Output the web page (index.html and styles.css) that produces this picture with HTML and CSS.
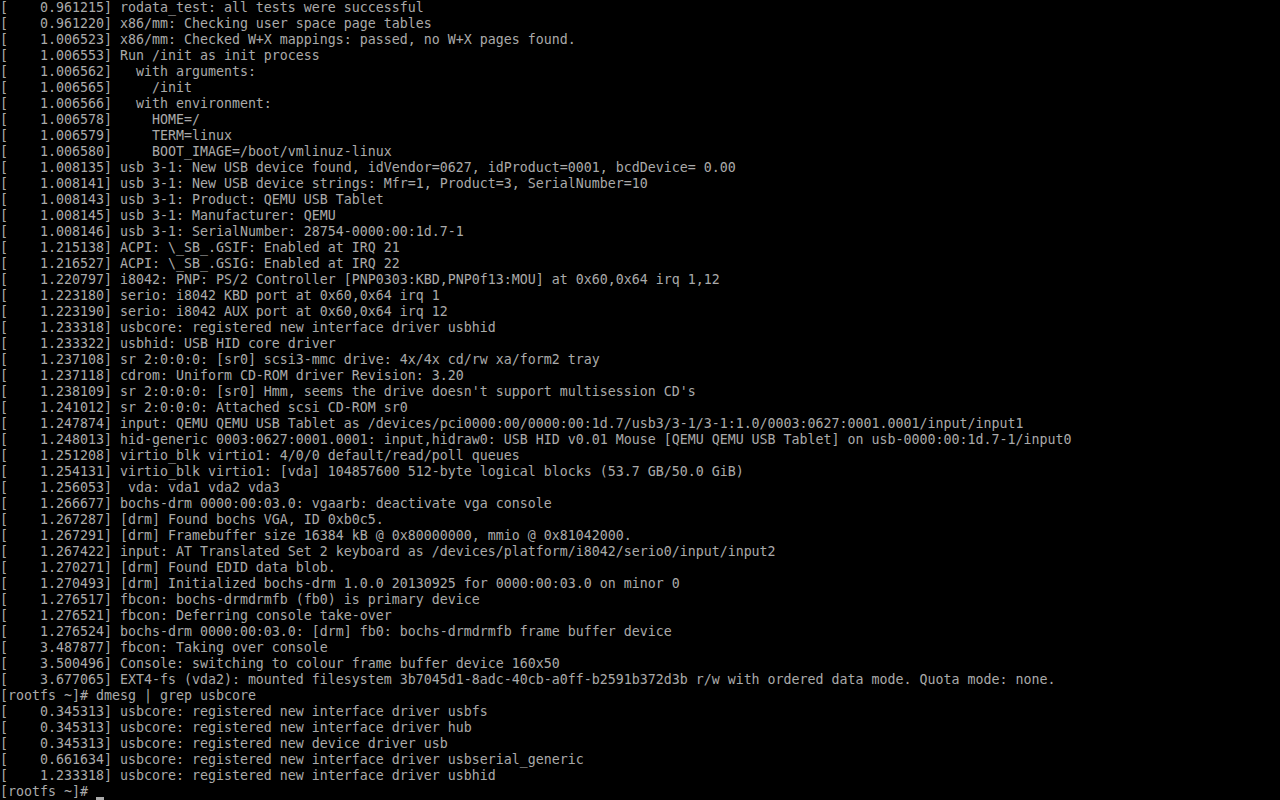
FILE: index.html
```html
<!DOCTYPE html>
<html>
<head>
<meta charset="utf-8">
<link rel="stylesheet" href="styles.css">
</head>
<body>
<pre class="console">[    0.961215] rodata_test: all tests were successful
[    0.961220] x86/mm: Checking user space page tables
[    1.006523] x86/mm: Checked W+X mappings: passed, no W+X pages found.
[    1.006553] Run /init as init process
[    1.006562]   with arguments:
[    1.006565]     /init
[    1.006566]   with environment:
[    1.006578]     HOME=/
[    1.006579]     TERM=linux
[    1.006580]     BOOT_IMAGE=/boot/vmlinuz-linux
[    1.008135] usb 3-1: New USB device found, idVendor=0627, idProduct=0001, bcdDevice= 0.00
[    1.008141] usb 3-1: New USB device strings: Mfr=1, Product=3, SerialNumber=10
[    1.008143] usb 3-1: Product: QEMU USB Tablet
[    1.008145] usb 3-1: Manufacturer: QEMU
[    1.008146] usb 3-1: SerialNumber: 28754-0000:00:1d.7-1
[    1.215138] ACPI: \_SB_.GSIF: Enabled at IRQ 21
[    1.216527] ACPI: \_SB_.GSIG: Enabled at IRQ 22
[    1.220797] i8042: PNP: PS/2 Controller [PNP0303:KBD,PNP0f13:MOU] at 0x60,0x64 irq 1,12
[    1.223180] serio: i8042 KBD port at 0x60,0x64 irq 1
[    1.223190] serio: i8042 AUX port at 0x60,0x64 irq 12
[    1.233318] usbcore: registered new interface driver usbhid
[    1.233322] usbhid: USB HID core driver
[    1.237108] sr 2:0:0:0: [sr0] scsi3-mmc drive: 4x/4x cd/rw xa/form2 tray
[    1.237118] cdrom: Uniform CD-ROM driver Revision: 3.20
[    1.238109] sr 2:0:0:0: [sr0] Hmm, seems the drive doesn't support multisession CD's
[    1.241012] sr 2:0:0:0: Attached scsi CD-ROM sr0
[    1.247874] input: QEMU QEMU USB Tablet as /devices/pci0000:00/0000:00:1d.7/usb3/3-1/3-1:1.0/0003:0627:0001.0001/input/input1
[    1.248013] hid-generic 0003:0627:0001.0001: input,hidraw0: USB HID v0.01 Mouse [QEMU QEMU USB Tablet] on usb-0000:00:1d.7-1/input0
[    1.251208] virtio_blk virtio1: 4/0/0 default/read/poll queues
[    1.254131] virtio_blk virtio1: [vda] 104857600 512-byte logical blocks (53.7 GB/50.0 GiB)
[    1.256053]  vda: vda1 vda2 vda3
[    1.266677] bochs-drm 0000:00:03.0: vgaarb: deactivate vga console
[    1.267287] [drm] Found bochs VGA, ID 0xb0c5.
[    1.267291] [drm] Framebuffer size 16384 kB @ 0x80000000, mmio @ 0x81042000.
[    1.267422] input: AT Translated Set 2 keyboard as /devices/platform/i8042/serio0/input/input2
[    1.270271] [drm] Found EDID data blob.
[    1.270493] [drm] Initialized bochs-drm 1.0.0 20130925 for 0000:00:03.0 on minor 0
[    1.276517] fbcon: bochs-drmdrmfb (fb0) is primary device
[    1.276521] fbcon: Deferring console take-over
[    1.276524] bochs-drm 0000:00:03.0: [drm] fb0: bochs-drmdrmfb frame buffer device
[    3.487877] fbcon: Taking over console
[    3.500496] Console: switching to colour frame buffer device 160x50
[    3.677065] EXT4-fs (vda2): mounted filesystem 3b7045d1-8adc-40cb-a0ff-b2591b372d3b r/w with ordered data mode. Quota mode: none.
[rootfs ~]# dmesg | grep usbcore
[    0.345313] usbcore: registered new interface driver usbfs
[    0.345313] usbcore: registered new interface driver hub
[    0.345313] usbcore: registered new device driver usb
[    0.661634] usbcore: registered new interface driver usbserial_generic
[    1.233318] usbcore: registered new interface driver usbhid
[rootfs ~]# <span class="cursor"></span></pre>
</body>
</html>
```

FILE: styles.css
```css
html, body {
  margin: 0;
  padding: 0;
  background: #000000;
  width: 1280px;
  height: 800px;
  overflow: hidden;
}

.console {
  margin: 0;
  padding: 0;
  color: #aaaaaa;
  font-family: "DejaVu Sans Mono", "Liberation Mono", monospace;
  font-size: 13.29px;
  line-height: 16px;
  white-space: pre;
}

.cursor {
  display: inline-block;
  width: 8px;
  height: 16px;
  vertical-align: top;
  box-sizing: border-box;
  border-bottom: 3px solid #aaaaaa;
  position: relative;
  top: 0;
}
```
